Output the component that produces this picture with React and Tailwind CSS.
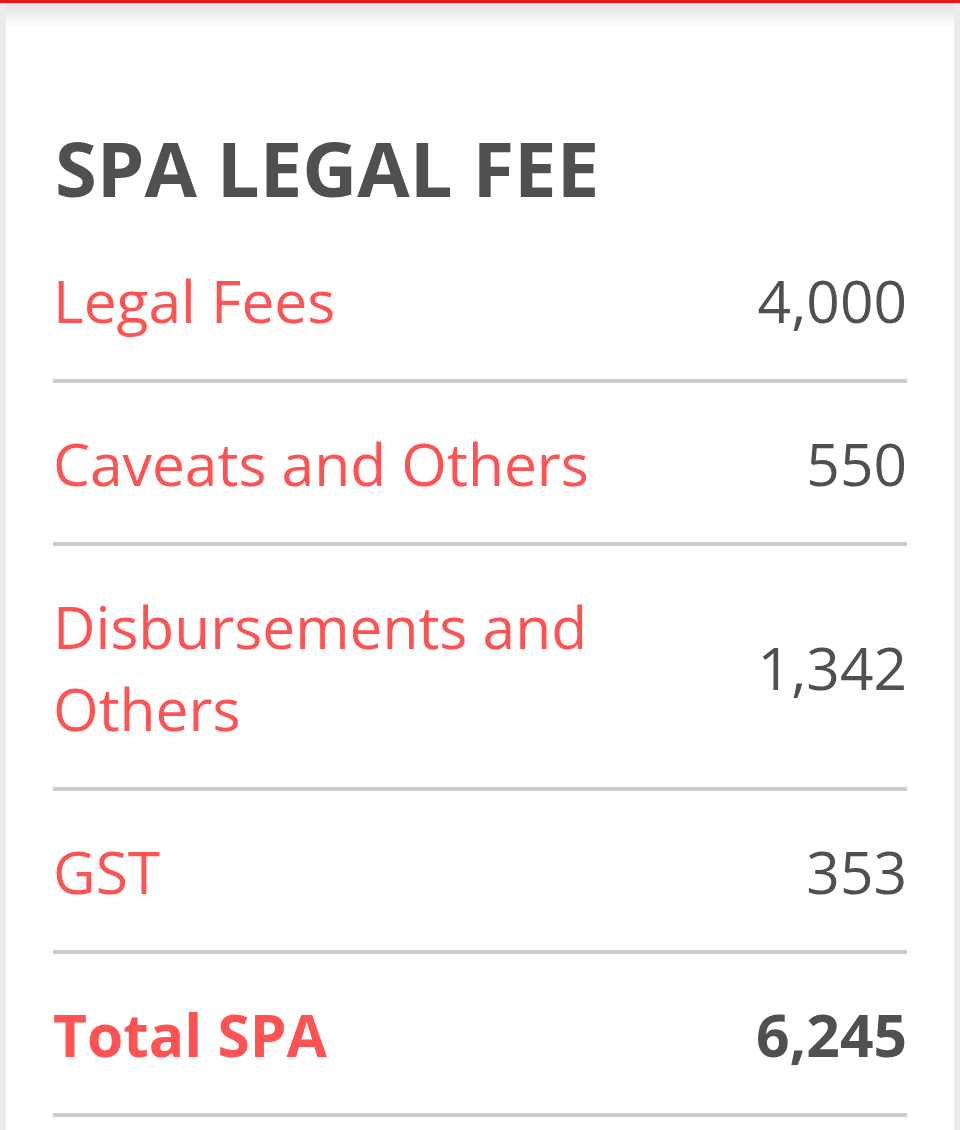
const rows = [
  { label: 'Legal Fees', value: '4,000' },
  { label: 'Caveats and Others', value: '550' },
  { label: 'Disbursements and Others', value: '1,342' },
  { label: 'GST', value: '353' },
];

function FeeRow({ label, value, bold }) {
  return (
    <div className="flex items-center justify-between gap-6 pt-[39px] pb-[38px] border-b-4 border-[#cccccc]">
      <span
        className={`text-[58.7px] leading-[82px] text-[#ff5252] max-w-[560px] ${bold ? 'font-bold' : ''}`}
      >
        {label}
      </span>
      <span className={`text-[58.7px] leading-[82px] text-[#505050] ${bold ? 'font-bold' : ''}`}>
        {value}
      </span>
    </div>
  );
}

export default function App() {
  return (
    <div
      className="min-h-[1130px] bg-[#ebebeb] relative"
      style={{ fontFamily: '"Open Sans", "Noto Sans", sans-serif' }}
    >
      {/* top bar */}
      <div className="absolute top-0 left-0 right-0 h-[3px] bg-[#ee1111] z-10" />
      <div className="absolute top-[3px] left-[6px] right-[6px] h-[24px] bg-gradient-to-b from-[#e2e2e2] to-white/0 z-10" />

      <div className="mx-[6px] bg-white min-h-[1130px] px-[47px] pt-[123px]">
        <h1 className="text-[76px] leading-[90px] font-bold text-[#505050] pl-[2px]">SPA LEGAL FEE</h1>
        <div className="mt-[7px]">
          {rows.map((r) => (
            <FeeRow key={r.label} label={r.label} value={r.value} />
          ))}
          <FeeRow label="Total SPA" value="6,245" bold />
        </div>
      </div>
    </div>
  );
}
